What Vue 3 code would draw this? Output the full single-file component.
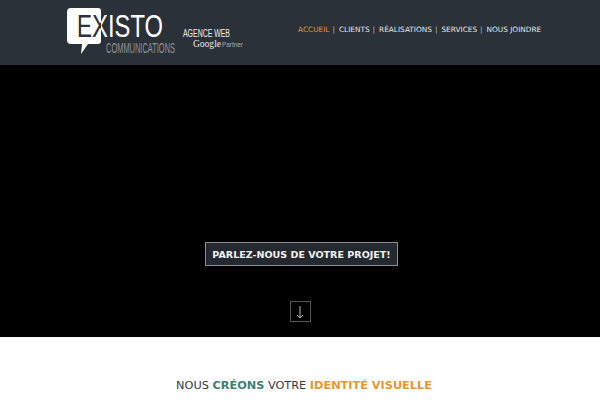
<template>
  <div class="page">
    <header class="topBar">
      <svg class="logo" width="190" height="65" viewBox="0 0 190 65">
        <defs>
          <linearGradient id="xFill" gradientUnits="userSpaceOnUse" x1="31" y1="0" x2="47" y2="0">
            <stop offset="0.56" stop-color="#2b3138" />
            <stop offset="0.56" stop-color="#fff" />
          </linearGradient>
        </defs>
        <path d="M10 8H37Q40 8 40 11V41Q40 44 37 44H27L20 54L21 44H10Q6 44 6 40V12Q6 8 10 8Z" fill="#fff" />
        <text x="16" y="37" class="logoBig dark" textLength="15" lengthAdjust="spacingAndGlyphs">E</text>
        <text x="31" y="37" class="logoBig" fill="url(#xFill)" textLength="16" lengthAdjust="spacingAndGlyphs">X</text>
        <text x="47" y="37" class="logoBig white" textLength="55" lengthAdjust="spacingAndGlyphs">ISTO</text>
        <text x="45" y="53" class="logoSmall" textLength="69" lengthAdjust="spacingAndGlyphs">COMMUNICATIONS</text>
        <text x="122" y="37" class="tagWeb" textLength="47" lengthAdjust="spacingAndGlyphs">AGENCE WEB</text>
        <text x="132" y="47" class="tagGoogle" textLength="28" lengthAdjust="spacingAndGlyphs">Google</text>
        <text x="161" y="47" class="tagPartner" textLength="21" lengthAdjust="spacingAndGlyphs">Partner</text>
      </svg>
      <nav class="nav">
        <template v-for="(item, i) in items" :key="item">
          <a :class="{ active: i === 0 }">{{ item }}</a>
          <span v-if="i < items.length - 1" class="sep">|</span>
        </template>
      </nav>
    </header>

    <section class="hero">
      <a class="cta">PARLEZ-NOUS DE VOTRE PROJET!</a>
      <div class="arrowBox">
        <svg width="10" height="14" viewBox="0 0 10 14">
          <path d="M5 1V13M2 10L5 13L8 10" fill="none" stroke="#bbb" stroke-width="1" />
        </svg>
      </div>
    </section>

    <section class="intro">
      <h2>NOUS <b class="green">CRÉONS</b> VOTRE <b class="orange">IDENTITÉ VISUELLE</b></h2>
    </section>
  </div>
</template>

<script setup>
const items = ['ACCUEIL', 'CLIENTS', 'RÉALISATIONS', 'SERVICES', 'NOUS JOINDRE']
</script>

<style>
html,
body {
  margin: 0;
  overflow: hidden;
}
</style>

<style scoped>
.page {
  width: 600px;
  height: 400px;
  overflow: hidden;
  background: #fff;
  font-family: 'DejaVu Sans', sans-serif;
}

.topBar {
  display: flex;
  align-items: flex-start;
  height: 65px;
  padding-left: 61px;
  box-sizing: border-box;
  background: #2b3138;
}

.logo {
  flex: none;
  width: 190px;
}

.logoBig {
  font-family: 'Liberation Sans', sans-serif;
  font-size: 32px;
}

.dark {
  fill: #2b3138;
}

.white {
  fill: #fff;
}

.logoSmall {
  font-family: 'Liberation Sans', sans-serif;
  font-size: 14px;
  fill: #8f9397;
}

.tagWeb {
  font-family: 'Liberation Sans', sans-serif;
  font-size: 10px;
  fill: #f0f0f0;
}

.tagGoogle {
  font-family: 'Liberation Serif', serif;
  font-size: 10px;
  fill: #e8e8e8;
}

.tagPartner {
  font-family: 'Liberation Sans', sans-serif;
  font-size: 7px;
  fill: #a8abae;
}

.nav {
  display: flex;
  align-items: center;
  height: 59px;
  margin-left: 47px;
  font-size: 7.35px;
  color: #e6e8ea;
  white-space: nowrap;
}

.nav a.active {
  color: #e09a3e;
}

.sep {
  margin: 0 4px 0 3px;
  color: #b5b8bb;
}

.hero {
  display: flex;
  flex-direction: column;
  align-items: center;
  height: 272px;
  background: #000;
}

.cta {
  margin: 177px 0 0 3px;
  padding: 1px 6px 0;
  height: 21px;
  line-height: 22px;
  border: 1px solid #8a8e92;
  background: #24292f;
  color: #f2f2f2;
  font-size: 9.55px;
  font-weight: 700;
  white-space: nowrap;
}

.arrowBox {
  display: flex;
  align-items: center;
  justify-content: center;
  width: 19px;
  height: 19px;
  margin-top: 35px;
  border: 1px solid #555;
}

.intro {
  text-align: center;
  padding: 41px 0 0 8px;
}

h2 {
  margin: 0;
  font-size: 11.3px;
  line-height: 16px;
  font-weight: 400;
  color: #33383d;
}

.green {
  color: #3f7f70;
}

.orange {
  color: #e8962e;
}
</style>
